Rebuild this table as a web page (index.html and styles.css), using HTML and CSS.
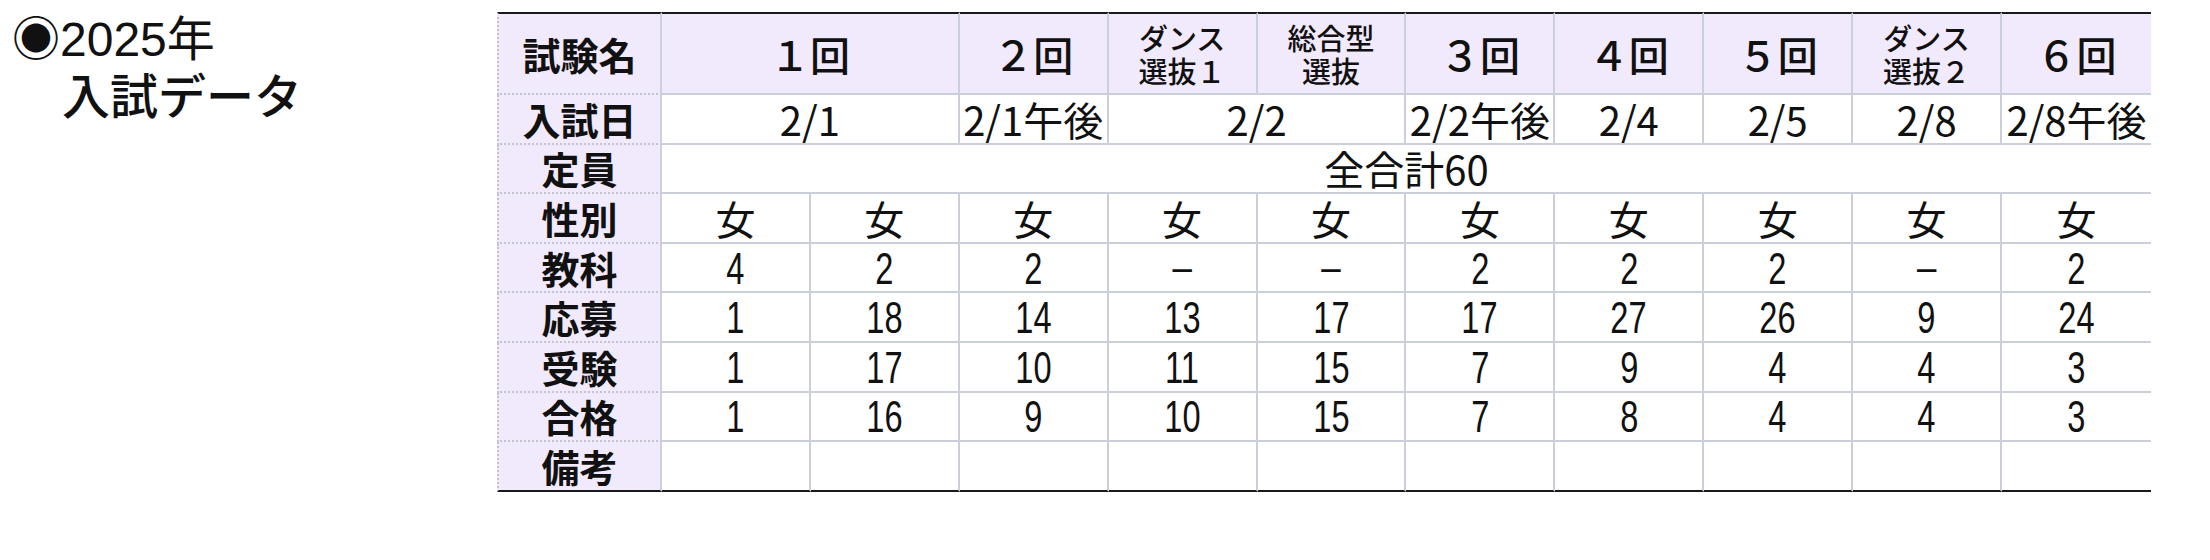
FILE: index.html
```html
<!DOCTYPE html>
<html lang="ja">
<head>
<meta charset="utf-8">
<title>2025年 入試データ</title>
<link rel="stylesheet" href="styles.css">
</head>
<body>
<div class="page">
  <div class="title">
    <div class="t1"><span class="mark">◉</span>2025年</div>
    <div class="t2">入試データ</div>
  </div>
  <table class="exam">
    <colgroup>
      <col class="c-label">
      <col class="c-data" span="10">
    </colgroup>
    <tr class="head">
      <th class="lab">試験名</th>
      <th colspan="2" class="big">１回</th>
      <th class="big">２回</th>
      <th class="small"><span class="ln">ダンス</span><span class="ln">選抜１</span></th>
      <th class="small"><span class="ln">総合型</span><span class="ln">選抜</span></th>
      <th class="big">３回</th>
      <th class="big">４回</th>
      <th class="big">５回</th>
      <th class="small"><span class="ln">ダンス</span><span class="ln">選抜２</span></th>
      <th class="big last">６回</th>
    </tr>
    <tr>
      <th class="lab">入試日</th>
      <td colspan="2">2/1</td>
      <td>2/1午後</td>
      <td colspan="2">2/2</td>
      <td>2/2午後</td>
      <td>2/4</td>
      <td>2/5</td>
      <td>2/8</td>
      <td class="last">2/8午後</td>
    </tr>
    <tr>
      <th class="lab">定員</th>
      <td colspan="10" class="last">全合計60</td>
    </tr>
    <tr>
      <th class="lab">性別</th>
      <td>女</td><td>女</td><td>女</td><td>女</td><td>女</td><td>女</td><td>女</td><td>女</td><td>女</td><td class="last">女</td>
    </tr>
    <tr class="num">
      <th class="lab">教科</th>
      <td><span class="n">4</span></td><td><span class="n">2</span></td><td><span class="n">2</span></td><td><span class="n dash">−</span></td><td><span class="n dash">−</span></td><td><span class="n">2</span></td><td><span class="n">2</span></td><td><span class="n">2</span></td><td><span class="n dash">−</span></td><td class="last"><span class="n">2</span></td>
    </tr>
    <tr class="num">
      <th class="lab">応募</th>
      <td><span class="n">1</span></td><td><span class="n">18</span></td><td><span class="n">14</span></td><td><span class="n">13</span></td><td><span class="n">17</span></td><td><span class="n">17</span></td><td><span class="n">27</span></td><td><span class="n">26</span></td><td><span class="n">9</span></td><td class="last"><span class="n">24</span></td>
    </tr>
    <tr class="num">
      <th class="lab">受験</th>
      <td><span class="n">1</span></td><td><span class="n">17</span></td><td><span class="n">10</span></td><td><span class="n">11</span></td><td><span class="n">15</span></td><td><span class="n">7</span></td><td><span class="n">9</span></td><td><span class="n">4</span></td><td><span class="n">4</span></td><td class="last"><span class="n">3</span></td>
    </tr>
    <tr class="num">
      <th class="lab">合格</th>
      <td><span class="n">1</span></td><td><span class="n">16</span></td><td><span class="n">9</span></td><td><span class="n">10</span></td><td><span class="n">15</span></td><td><span class="n">7</span></td><td><span class="n">8</span></td><td><span class="n">4</span></td><td><span class="n">4</span></td><td class="last"><span class="n">3</span></td>
    </tr>
    <tr class="end">
      <th class="lab">備考</th>
      <td></td><td></td><td></td><td></td><td></td><td></td><td></td><td></td><td></td><td class="last"></td>
    </tr>
  </table>
</div>
</body>
</html>
```
FILE: styles.css
```css
html, body {
  margin: 0;
  padding: 0;
  background: #ffffff;
}

body {
  font-family: "Noto Sans CJK JP", "Noto Sans", sans-serif;
  color: #111111;
}

.page {
  display: flex;
  align-items: flex-start;
  padding: 12px 0 0 14px;
}

.title {
  width: 483px;
  flex: none;
  font-size: 48px;
  margin-top: -6px;
}

.t1 {
  height: 58px;
  line-height: 58px;
  font-family: "Liberation Sans", "Noto Sans CJK JP", sans-serif;
  white-space: nowrap;
}

.t1 .mark {
  font-family: "Noto Sans CJK JP", sans-serif;
  margin-left: -2px;
}

.t2 {
  height: 58px;
  line-height: 58px;
  padding-left: 48px;
  font-family: "Noto Sans CJK JP", sans-serif;
  font-weight: 500;
  white-space: nowrap;
}

.exam {
  border-collapse: separate;
  border-spacing: 0;
  table-layout: fixed;
  width: 1654px;
}

.c-label { width: 165px; }
.c-data { width: 148.9px; }

.exam th,
.exam td {
  padding: 0;
  text-align: center;
  vertical-align: middle;
  line-height: 1.1;
  border-right: 2px solid #cbcfd9;
  border-bottom: 2px solid #cbcfd9;
  height: 47.6px;
  white-space: nowrap;
}

.exam td {
  font-size: 40px;
  font-weight: 400;
}

.exam th {
  background: #f1eafc;
}

.exam th.lab {
  font-size: 38px;
  font-weight: 700;
  border-left: 2px dotted #c4c4cc;
  border-right: 2px solid #cfd1d9;
  border-bottom: 2px dotted #c4c4cc;
}

.exam .head th {
  border-top: 2px solid #1a1a1a;
  height: 79px;
}

.exam th.big {
  font-size: 40px;
  font-weight: 500;
}

.exam th.small {
  font-size: 29px;
  font-weight: 500;
  line-height: 1;
}

.exam th.small .ln {
  display: block;
  height: 33px;
  line-height: 33px;
}

.exam .n {
  display: inline-block;
  font-family: "Liberation Sans", "Noto Sans CJK JP", sans-serif;
  font-size: 44px;
  line-height: 1;
  transform: scaleX(0.74);
}

.exam .n.dash {
  transform: scaleX(1);
  font-size: 40px;
}

.exam .last {
  border-right: none;
}

.exam .end th,
.exam .end td {
  border-bottom: 2px solid #1a1a1a;
}
```
